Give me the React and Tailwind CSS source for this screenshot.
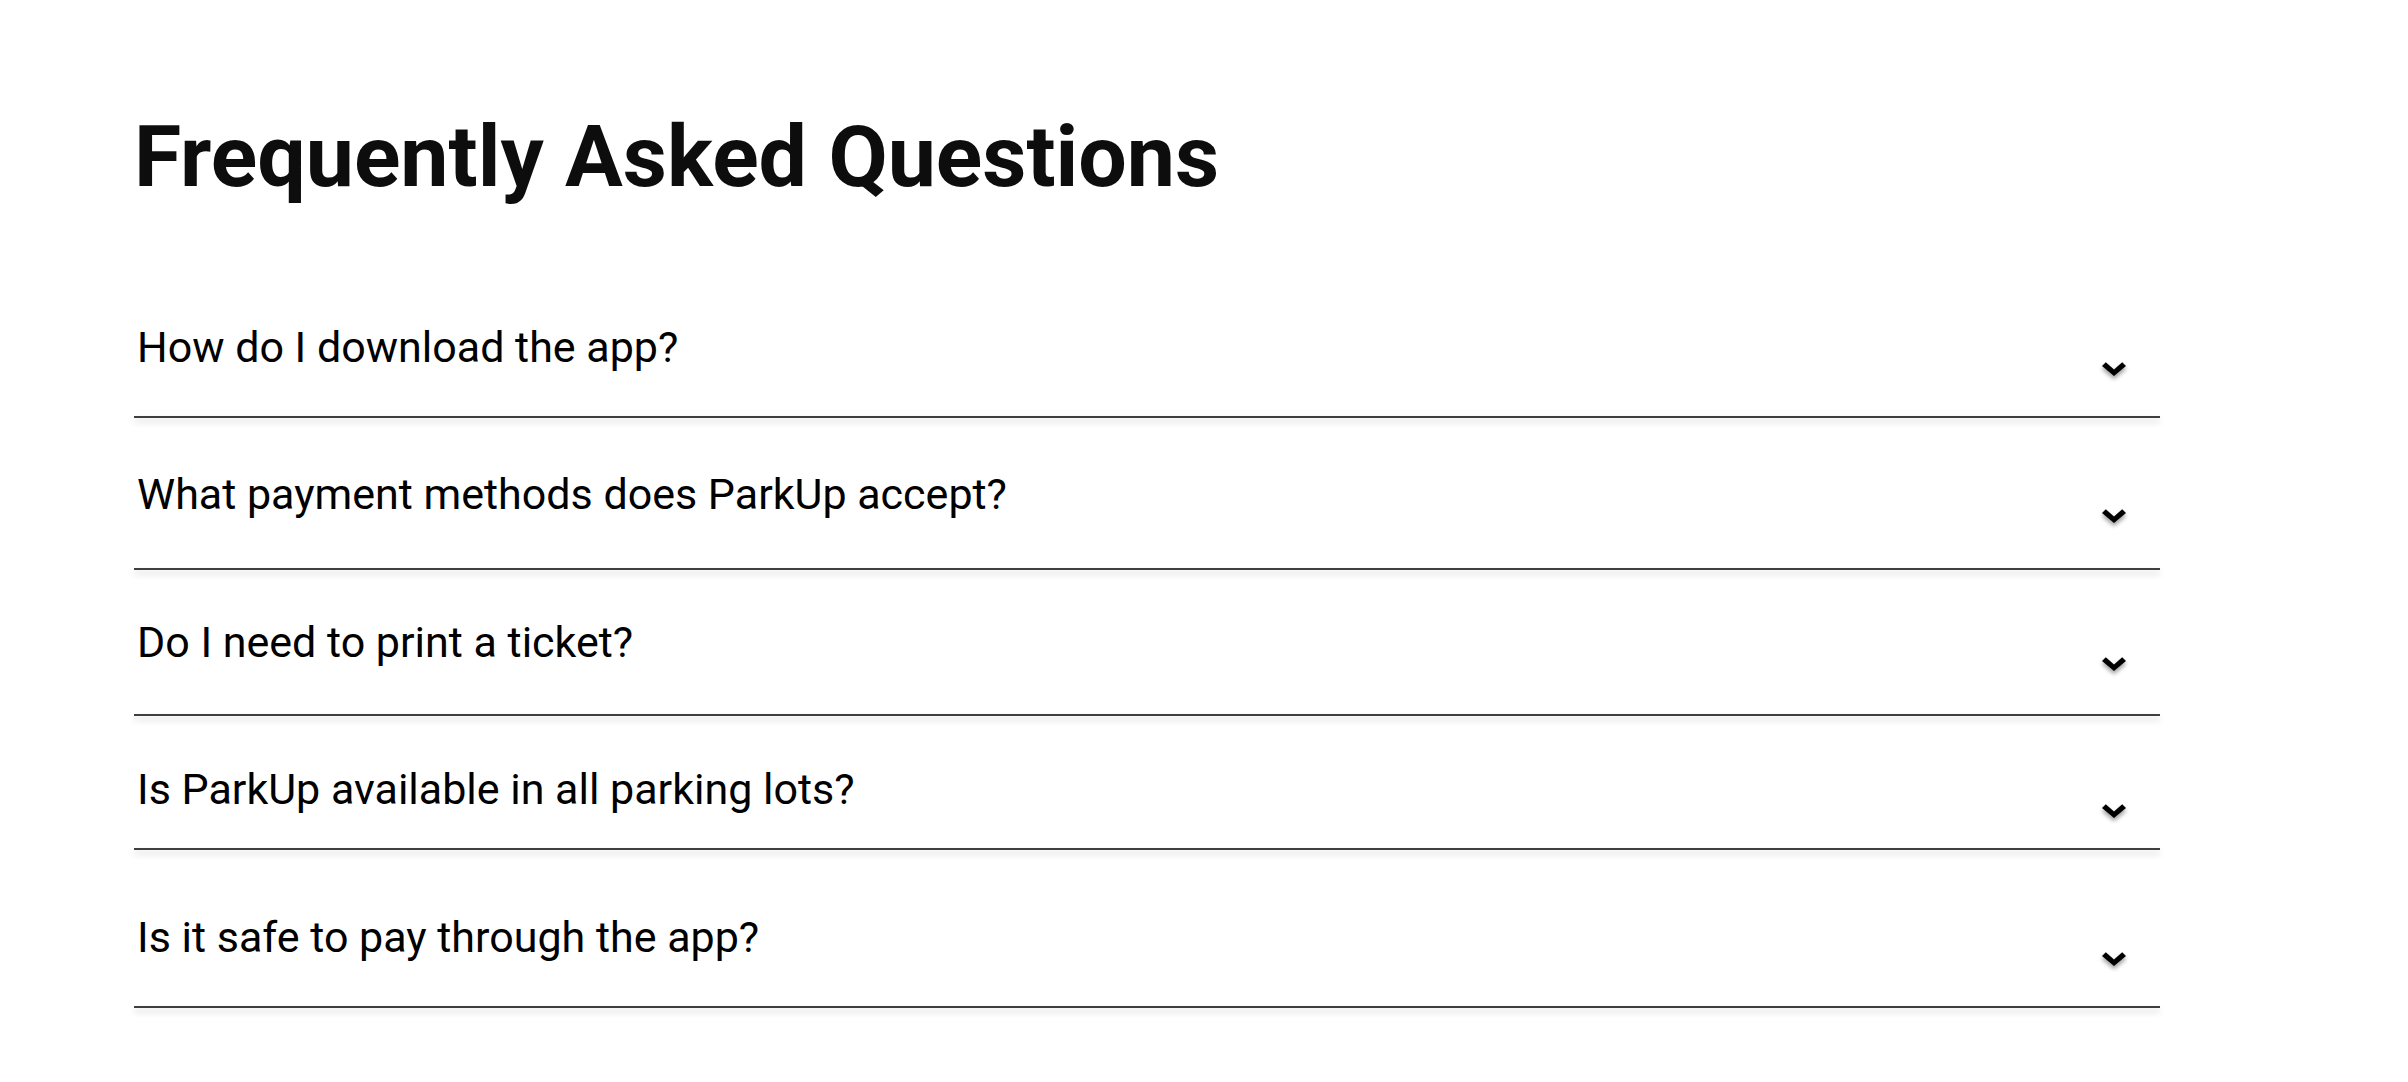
const faqs = [
  { q: "How do I download the app?", gap: "mt-[40px]" },
  { q: "What payment methods does ParkUp accept?", gap: "mt-[45px]" },
  { q: "Do I need to print a ticket?", gap: "mt-[43px]" },
  { q: "Is ParkUp available in all parking lots?", gap: "mt-[30px]" },
  { q: "Is it safe to pay through the app?", gap: "mt-[40px]" },
];

function Chevron() {
  return (
    <svg
      className="mt-[41px] mr-[34px] drop-shadow-[0_3px_2px_rgba(0,0,0,0.4)]"
      width="24"
      height="14"
      viewBox="0 0 24 14"
    >
      <polygon points="0,4 3.8,0.2 12,7.6 20.2,0.2 24,4 12,14" fill="#000" />
    </svg>
  );
}

function FaqItem({ item }) {
  return (
    <div className="h-[147.4px] flex flex-col">
      <div className="flex items-start justify-between">
        <p className="pl-[3px] text-[43px] leading-[52px] text-black">{item.q}</p>
        <Chevron />
      </div>
      <div
        className={
          "h-[2px] w-full bg-[#3f3f3f] shadow-[0_4px_6px_rgba(0,0,0,0.2)] " +
          item.gap
        }
      ></div>
    </div>
  );
}

export default function App() {
  return (
    <div
      className="min-h-screen bg-white pl-[134px] pt-[114px]"
      style={{ fontFamily: "Roboto, 'Liberation Sans', sans-serif" }}
    >
      <h1 className="text-[86px] leading-none font-bold text-[#0d0d0d]">
        Frequently Asked Questions
      </h1>
      <div className="w-[2026px] mt-[121px]">
        {faqs.map((item, idx) => (
          <FaqItem item={item} key={idx} />
        ))}
      </div>
    </div>
  );
}
